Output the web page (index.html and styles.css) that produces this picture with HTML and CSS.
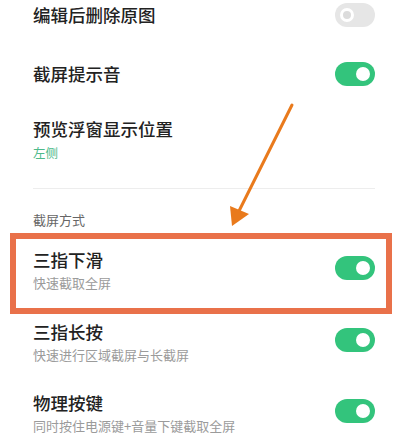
FILE: index.html
```html
<!DOCTYPE html>
<html lang="zh-CN">
<head>
<meta charset="utf-8">
<link rel="stylesheet" href="styles.css">
</head>
<body>
<div class="page">
  <div class="row row-first">
    <div class="title">编辑后删除原图</div>
    <span class="toggle off"><span class="knob"></span></span>
  </div>
  <div class="row row-sound">
    <div class="title">截屏提示音</div>
    <span class="toggle on"><span class="knob"></span></span>
  </div>
  <div class="row-pos">
    <div class="title">预览浮窗显示位置</div>
    <div class="value">左侧</div>
  </div>
  <div class="divider"></div>
  <div class="section">截屏方式</div>
  <div class="row two highlight">
    <div class="texts">
      <div class="title">三指下滑</div>
      <div class="sub">快速截取全屏</div>
    </div>
    <span class="toggle on"><span class="knob"></span></span>
  </div>
  <div class="row two r5">
    <div class="texts">
      <div class="title">三指长按</div>
      <div class="sub">快速进行区域截屏与长截屏</div>
    </div>
    <span class="toggle on"><span class="knob"></span></span>
  </div>
  <div class="row two r6">
    <div class="texts">
      <div class="title">物理按键</div>
      <div class="sub">同时按住电源键+音量下键截取全屏</div>
    </div>
    <span class="toggle on"><span class="knob"></span></span>
  </div>
</div>
<svg class="arrow" width="400" height="438" viewBox="0 0 400 438">
  <line x1="292" y1="105" x2="239" y2="211" stroke="#e97a1c" stroke-width="3" stroke-linecap="round"/>
  <polygon points="230,206 249,214 232,226" fill="#e97a1c"/>
</svg>
</body>
</html>
```
FILE: styles.css
```css
html, body {
  margin: 0;
  padding: 0;
  background: #ffffff;
  width: 400px;
  height: 438px;
  overflow: hidden;
}
body {
  font-family: "Noto Sans CJK SC", "Noto Sans", sans-serif;
  position: relative;
}
.page {
  padding: 0 25px 0 33px;
}
.row {
  display: flex;
  align-items: center;
  justify-content: space-between;
}
.row-first {
  height: 30px;
}
.row-sound {
  height: 88px;
}
.title {
  font-size: 17.5px;
  line-height: 22px;
  font-weight: 500;
  color: #222222;
  white-space: nowrap;
}
.row-pos {
  padding-bottom: 27px;
}
.value {
  margin-top: 5px;
  font-size: 12.5px;
  line-height: 16px;
  color: #4dba8a;
}
.divider {
  height: 1px;
  background: #ededed;
}
.section {
  margin-top: 22px;
  font-size: 13px;
  line-height: 18px;
  color: #666666;
}
.sub {
  margin-top: 3px;
  font-size: 13px;
  line-height: 18px;
  color: #9b9b9b;
  white-space: nowrap;
}
.two .toggle {
  margin-bottom: 6px;
}
.highlight {
  margin: 4px -17px 0 -23px;
  border: 6px solid #e9714a;
  padding: 10px 11px 16px 17px;
}
.r5 {
  padding-top: 7px;
  padding-bottom: 14px;
}
.r6 {
  padding-top: 14px;
}
.toggle {
  position: relative;
  flex: none;
  width: 40px;
  height: 24px;
  border-radius: 12px;
}
.toggle.on {
  background: #33c47c;
}
.toggle.off {
  background: #e6e6e6;
}
.knob {
  position: absolute;
  top: 5px;
  width: 14px;
  height: 14px;
  border-radius: 50%;
  background: #ffffff;
  box-sizing: border-box;
}
.toggle.on .knob {
  right: 5px;
}
.toggle.off .knob {
  left: 5px;
  border: 3.5px solid #ffffff;
  background: #dcdcdc;
}
.arrow {
  position: absolute;
  left: 0;
  top: 0;
  pointer-events: none;
}
```
